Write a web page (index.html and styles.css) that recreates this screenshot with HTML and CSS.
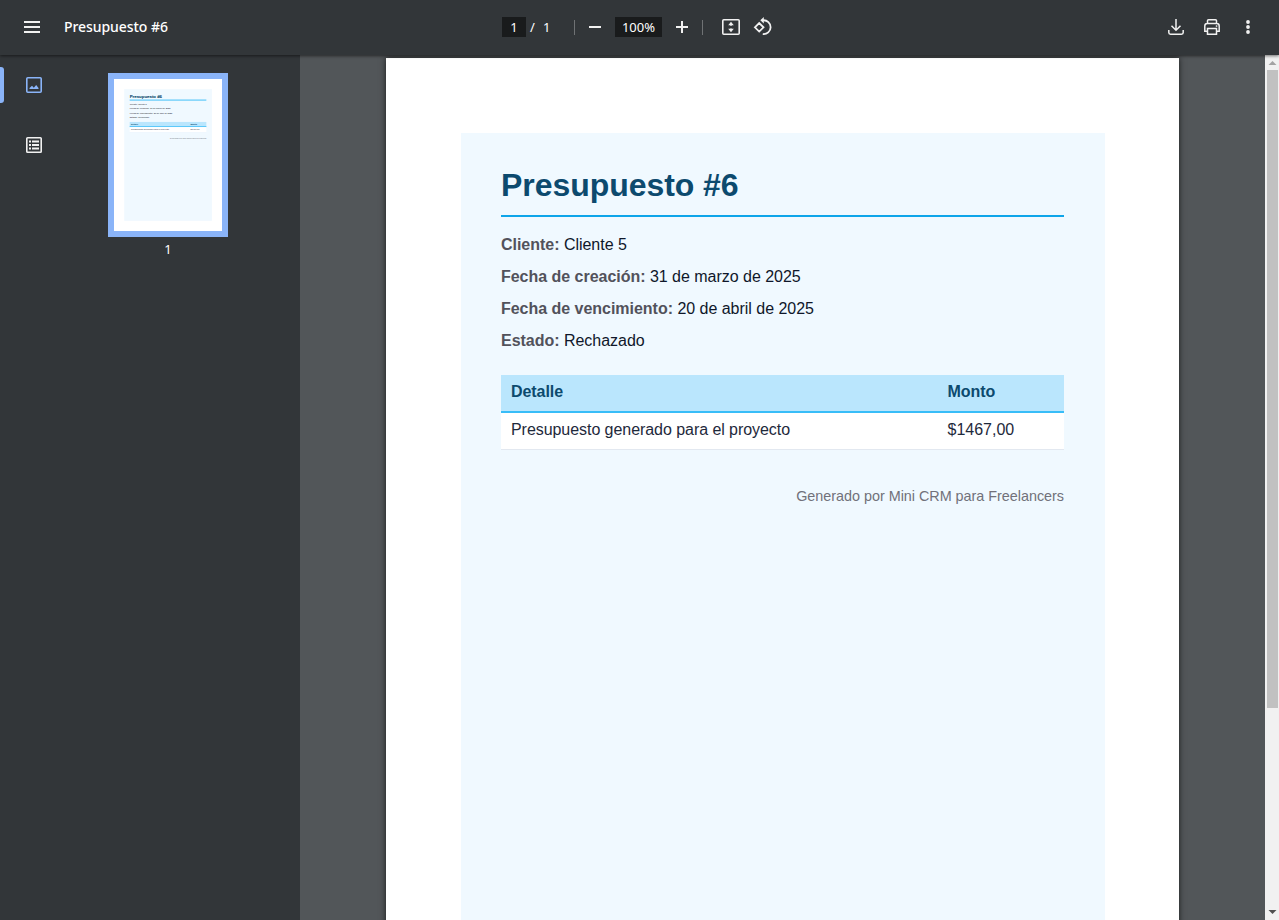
FILE: index.html
```html
<!DOCTYPE html>
<html lang="es">
<head>
<meta charset="utf-8">
<title>Presupuesto #6</title>
<link rel="stylesheet" href="styles.css">
</head>
<body>
<div class="viewer">
  <header class="toolbar">
    <div class="start">
      <svg class="icon" viewBox="0 0 24 24"><path d="M4 6h16v2H4zm0 5h16v2H4zm0 5h16v2H4z"/></svg>
      <span class="title">Presupuesto #6</span>
    </div>
    <div class="center">
      <span class="field page-no">1</span><span class="slash">/</span><span class="total">1</span>
      <span class="divider"></span>
      <svg class="icon minus" viewBox="0 0 20 20"><path d="M4 9h12v2H4z"/></svg>
      <span class="field zoom">100%</span>
      <svg class="icon plus" viewBox="0 0 20 20"><path d="M4 9h5V4h2v5h5v2h-5v5H9v-5H4z"/></svg>
      <span class="divider"></span>
      <svg class="icon fit" viewBox="0 0 20 20"><rect x="1.8" y="2.8" width="16.4" height="14.4" rx="1" fill="none" stroke="#f1f1f1" stroke-width="1.6"/><path d="M10 4.800l2.800 3.400H7.200zM10 15.200l2.800-3.400H7.200zM9.400 8h1.200v1H9.400zm0 3h1.200v1H9.400z"/></svg>
      <svg class="icon rotate" viewBox="0 0 20 20"><path d="M1.900 10.300L6.200 6l4.300 4.300-4.300 4.300zM10 3.300a6.900 6.900 0 1 1-.2 13.700" fill="none" stroke="#f1f1f1" stroke-width="1.800"/><path d="M10.800 0v6.600L7.300 3.300z"/></svg>
    </div>
    <div class="end">
      <svg class="icon" viewBox="0 0 24 24"><path d="M12 4v11M7.500 10.800l4.500 4.500 4.500-4.500M4.800 15v2.500q0 1.700 1.700 1.700h11q1.700 0 1.700-1.700V15" fill="none" stroke="#f1f1f1" stroke-width="1.500"/></svg>
      <svg class="icon" viewBox="0 0 24 24"><path d="M7.500 8.500V5.700q0-1 1-1h7q1 0 1 1v2.800M7.500 16.300H4.800V11q0-2.500 2.500-2.500h9.400q2.500 0 2.500 2.500v5.300h-2.700M7.500 13.500h9v5.800h-9z" fill="none" stroke="#f1f1f1" stroke-width="1.500"/><path d="M15.800 10.300h1.500v1.500h-1.500z"/></svg>
      <svg class="icon" viewBox="0 0 24 24"><circle cx="12" cy="7" r="1.900"/><circle cx="12" cy="12" r="1.900"/><circle cx="12" cy="17" r="1.900"/></svg>
    </div>
  </header>
  <div class="body">
    <aside class="sidebar">
      <nav class="tabs">
        <div class="tab active"><span class="marker"></span><svg class="tab-icon" viewBox="0 0 16 16"><rect x=".8" y=".8" width="14.400" height="14.400" rx="1" fill="none" stroke="#8ab4f8" stroke-width="1.600"/><path d="M3.500 12V11l2.500-2.200 1.800 2L10.200 8l2.300 3v1z" fill="#8ab4f8"/></svg></div>
        <div class="tab"><svg class="tab-icon" viewBox="0 0 16 16"><rect x=".8" y=".8" width="14.400" height="14.400" rx=".8" fill="none" stroke="#f1f1f1" stroke-width="1.600"/><path d="M3 3.600h2v2H3zm3 0h7v2H6zM3 7h2v2H3zm3 0h7v2H6zM3 10.400h2v2H3zm3 0h7v2H6z" fill="#f1f1f1"/></svg></div>
      </nav>
      <div class="thumbs">
        <div class="thumb"><div class="thumb-clip"><div class="page mini">
          <article class="sheet">
            <h1>Presupuesto #6</h1>
            <p><b>Cliente:</b> Cliente 5</p>
            <p><b>Fecha de creación:</b> 31 de marzo de 2025</p>
            <p><b>Fecha de vencimiento:</b> 20 de abril de 2025</p>
            <p><b>Estado:</b> Rechazado</p>
            <div class="table"><div class="row head"><span>Detalle</span><span>Monto</span></div><div class="row"><span>Presupuesto generado para el proyecto</span><span>$1467,00</span></div></div>
            <footer>Generado por Mini CRM para Freelancers</footer>
          </article>
        </div></div></div>
        <span class="thumb-no">1</span>
      </div>
    </aside>
    <main class="canvas">
      <div class="page">
        <article class="sheet">
          <h1>Presupuesto #6</h1>
          <p><b>Cliente:</b> Cliente 5</p>
          <p><b>Fecha de creación:</b> 31 de marzo de 2025</p>
          <p><b>Fecha de vencimiento:</b> 20 de abril de 2025</p>
          <p><b>Estado:</b> Rechazado</p>
          <div class="table"><div class="row head"><span>Detalle</span><span>Monto</span></div><div class="row"><span>Presupuesto generado para el proyecto</span><span class="amount">$1467,00</span></div></div>
          <footer>Generado por Mini CRM para Freelancers</footer>
        </article>
      </div>
    </main>
    <div class="scrollbar">
      <svg class="arrow" viewBox="0 0 14 14"><path d="M7.500 6l4 4h-8z" fill="#a3a3a3"/></svg>
      <div class="handle"></div>
      <svg class="arrow down" viewBox="0 0 14 14"><path d="M3.500 4h8l-4 4z" fill="#505050"/></svg>
    </div>
  </div>
</div>
</body>
</html>
```

FILE: styles.css
```css
* { box-sizing: border-box; }
body { margin: 0; background: #525659; overflow: hidden; }
.viewer { height: 920px; display: flex; flex-direction: column; }

.toolbar {
  flex: none;
  height: 55px;
  padding-bottom: 1px;
  display: grid;
  grid-template-columns: 500px 1fr 127px;
  align-items: center;
  background: #323639;
  color: #fff;
  font: 500 14px "Noto Sans", sans-serif;
  box-shadow: 0 1px 3px rgba(0, 0, 0, .55);
  position: relative;
  z-index: 2;
}
.start { display: flex; align-items: center; gap: 20px; padding-left: 20px; }
.title { letter-spacing: -.06px; line-height: 20px; }
.icon { display: block; flex: none; width: 24px; height: 24px; fill: #f1f1f1; }
.center { display: flex; align-items: center; font-size: 13px; font-weight: 400; padding-left: 2px; }
.center .icon { width: 20px; height: 20px; }
.field { background: #191b1c; height: 20px; line-height: 20px; text-align: center; }
.page-no { width: 24px; }
.slash { margin-left: 4px; width: 13px; }
.total { width: 31px; }
.divider { width: 1px; height: 15px; background: #6f7274; }
.minus { margin: 0 10px; }
.zoom { width: 47px; }
.plus { margin: 0 10px; }
.fit { margin-left: 18px; }
.rotate { margin-left: 12px; overflow: visible; }
.end { display: flex; gap: 12px; padding-left: 12px; }

.body { flex: 1; min-height: 0; display: flex; }
.sidebar { width: 300px; flex: none; display: flex; background: #323639; }
.tabs { width: 68px; padding-top: 12px; display: flex; flex-direction: column; gap: 24px; }
.tab { height: 36px; display: flex; align-items: center; padding-left: 26px; }
.tab.active { padding-left: 0; gap: 22px; }
.marker { width: 4px; height: 36px; background: #8ab4f8; border-radius: 0 3px 3px 0; }
.tab-icon { display: block; width: 16px; height: 16px; }
.thumbs { width: 200px; padding-top: 18px; display: flex; flex-direction: column; align-items: center; }
.thumb { border: 6px solid #8ab4f8; width: 120px; height: 164px; }
.thumb-clip { width: 108px; height: 152px; overflow: hidden; background: #fff; }
.thumb-no { color: #fff; font: 13px/18px "Noto Sans", sans-serif; margin-top: 3px; }

.canvas { flex: 1; overflow: hidden; padding: 3px 0 0 86px; background: #525659; }
.page {
  width: 793px;
  height: 1122px;
  padding: 75px 74px 75px 75px;
  background: #fff;
  box-shadow: 0 0 6px rgba(0, 0, 0, .7);
  font: 16px "Liberation Sans", Arial, sans-serif;
  letter-spacing: -.025px;
  color: #0f172a;
}
.sheet { height: 100%; background: #f0f9ff; padding: 32px 41px 0 40px; }
h1 {
  margin: 0 0 12px;
  height: 52px;
  font-size: 32px;
  line-height: 40px;
  letter-spacing: -.05px;
  color: #0c4a6e;
  border-bottom: 2px solid #0ea5e9;
}
p { margin: 0; height: 32px; line-height: 32px; }
b { color: #52525b; }
.table { margin-top: 18px; height: 76px; }
.row {
  display: grid;
  grid-template-columns: 436.5px 1fr;
  height: 37px;
  line-height: 34px;
  letter-spacing: -.055px;
  background: #fff;
  color: #1e293b;
  border-bottom: 1px solid #e2e8f0;
}
.row span { padding-left: 10px; }
.row .amount { letter-spacing: 0; }
.head { height: 38px; background: #bae6fd; border-bottom: 2px solid #38bdf8; color: #0c4a6e; font-weight: 700; }
footer { margin-top: 36px; text-align: right; font-size: 14.4px; line-height: 18px; color: #71717a; }

.mini { transform: scale(.1362, .1355); transform-origin: 0 0; box-shadow: none; }
.mini h1 { border-bottom-width: 7px; border-bottom-color: #38bdf8; -webkit-text-stroke: .6px #0c4a6e; }
.mini .head { border-bottom-width: 6px; }

.scrollbar { flex: none; width: 14px; background: #f1f1f1; display: flex; flex-direction: column; align-items: center; }
.arrow { width: 14px; height: 14px; display: block; }
.handle { width: 11px; height: 638px; margin: 1px 0 0 1px; background: #c1c1c1; }
.down { margin-top: auto; }
```
